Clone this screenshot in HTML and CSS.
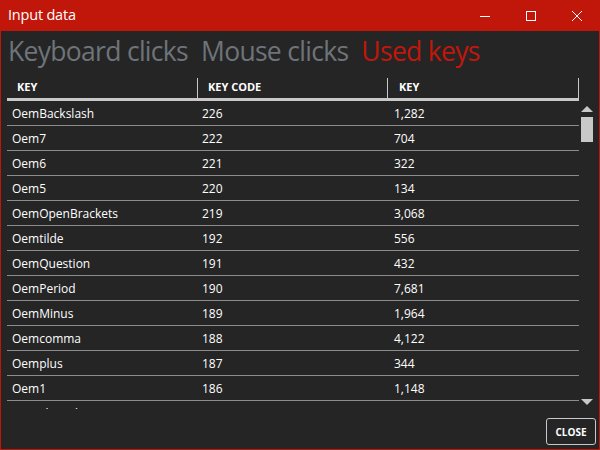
FILE: index.html
```html
<!DOCTYPE html>
<html>
<head>
<meta charset="utf-8">
<link rel="stylesheet" href="styles.css">
</head>
<body>
<div class="window">
  <div class="titlebar">
    <span class="title">Input data</span>
    <div class="controls">
      <span class="ctl"><svg width="12" height="12" viewBox="0 0 12 12"><path d="M1 6.5H11" stroke="#fff" stroke-width="1"/></svg></span>
      <span class="ctl"><svg width="12" height="12" viewBox="0 0 12 12"><rect x="1.5" y="1.5" width="9" height="9" fill="none" stroke="#fff" stroke-width="1"/></svg></span>
      <span class="ctl"><svg width="12" height="12" viewBox="0 0 12 12"><path d="M1 1L11 11M11 1L1 11" stroke="#fff" stroke-width="1"/></svg></span>
    </div>
  </div>
  <div class="content">
    <div class="tabs">
      <span class="tab">Keyboard clicks</span>
      <span class="tab">Mouse clicks</span>
      <span class="tab active">Used keys</span>
    </div>
    <div class="grid">
      <div class="table">
        <div class="head">
          <div class="hcell">KEY</div>
          <div class="hcell">KEY CODE</div>
          <div class="hcell">KEY</div>
        </div>
        <div class="body">
          <div class="row"><span>OemBackslash</span><span>226</span><span>1,282</span></div>
          <div class="row"><span>Oem7</span><span>222</span><span>704</span></div>
          <div class="row"><span>Oem6</span><span>221</span><span>322</span></div>
          <div class="row"><span>Oem5</span><span>220</span><span>134</span></div>
          <div class="row"><span>OemOpenBrackets</span><span>219</span><span>3,068</span></div>
          <div class="row"><span>Oemtilde</span><span>192</span><span>556</span></div>
          <div class="row"><span>OemQuestion</span><span>191</span><span>432</span></div>
          <div class="row"><span>OemPeriod</span><span>190</span><span>7,681</span></div>
          <div class="row"><span>OemMinus</span><span>189</span><span>1,964</span></div>
          <div class="row"><span>Oemcomma</span><span>188</span><span>4,122</span></div>
          <div class="row"><span>Oemplus</span><span>187</span><span>344</span></div>
          <div class="row"><span>Oem1</span><span>186</span><span>1,148</span></div>
          <div class="row"><span>LaunchApplication2</span><span>183</span><span>45</span></div>
        </div>
      </div>
      <div class="scrollbar">
        <span class="arrow up"></span>
        <span class="thumb"></span>
        <span class="track"></span>
        <span class="arrow down"></span>
      </div>
    </div>
    <div class="footer">
      <button class="close">CLOSE</button>
    </div>
  </div>
</div>
</body>
</html>
```
FILE: styles.css
```css
* { box-sizing: border-box; }
html, body { margin: 0; padding: 0; }
body { width: 600px; height: 450px; overflow: hidden; background: #252525; font-family: "Open Sans", "Noto Sans", sans-serif; }
.window { width: 600px; height: 450px; display: flex; flex-direction: column; border: 1px solid #c1170b; border-top: none; background: #252525; }
.titlebar { height: 31px; background: #c1170b; display: flex; align-items: center; justify-content: space-between; margin: 0 -1px; padding-left: 8px; }
.title { color: #fff; font-size: 14.5px; letter-spacing: -0.2px; line-height: 1; }
.controls { display: flex; height: 31px; }
.ctl { width: 46px; height: 31px; display: flex; align-items: center; justify-content: center; }
.content { flex: 1; display: flex; flex-direction: column; padding: 6px 0 0 6px; min-height: 0; }
.tabs { display: flex; gap: 13px; height: 38px; align-items: flex-start; padding: 1px 0 0 1px; }
.tab { font-size: 26.5px; color: #6d747a; letter-spacing: -0.7px; line-height: 1; white-space: nowrap; }
.tab.active { color: #c1170b; }
.grid { display: flex; height: 334px; }
.table { width: 572px; display: flex; flex-direction: column; }
.head { display: grid; grid-template-columns: 191px 190px 191px; height: 26px; border-bottom: 3px solid #c8c8c8; }
.hcell { color: #fff; font-weight: 700; font-size: 11px; padding-left: 10px; border-right: 1px solid #c8c8c8; display: flex; align-items: center; margin-top: 3px; padding-bottom: 3px; }
.hcell:nth-child(3) { padding-left: 11px; }
.body { height: 308px; overflow: hidden; }
.row { display: grid; grid-template-columns: 190px 192px 190px; height: 25px; border-bottom: 1px solid #8c8c8c; align-items: center; color: #fff; font-size: 12px; }
.row span { padding-left: 5px; }
.scrollbar { width: 12px; margin: 27px 0 0 2px; display: flex; flex-direction: column; align-items: center; height: 303px; }
.arrow { width: 0; height: 0; border-left: 6px solid transparent; border-right: 6px solid transparent; }
.arrow.up { border-bottom: 6px solid #c8c8c8; margin-top: 4px; }
.arrow.down { border-top: 6px solid #c8c8c8; }
.thumb { width: 12px; height: 25px; background: #c8c8c8; margin-top: 5px; }
.track { flex: 1; }
.footer { display: flex; justify-content: flex-end; padding: 9px 3px 0 0; }
.close { width: 50px; height: 27px; background: transparent; border: 1px solid #c8c8c8; border-radius: 3px; color: #fff; font-family: "Open Sans", sans-serif; font-weight: 700; font-size: 10px; padding: 0; }
```
